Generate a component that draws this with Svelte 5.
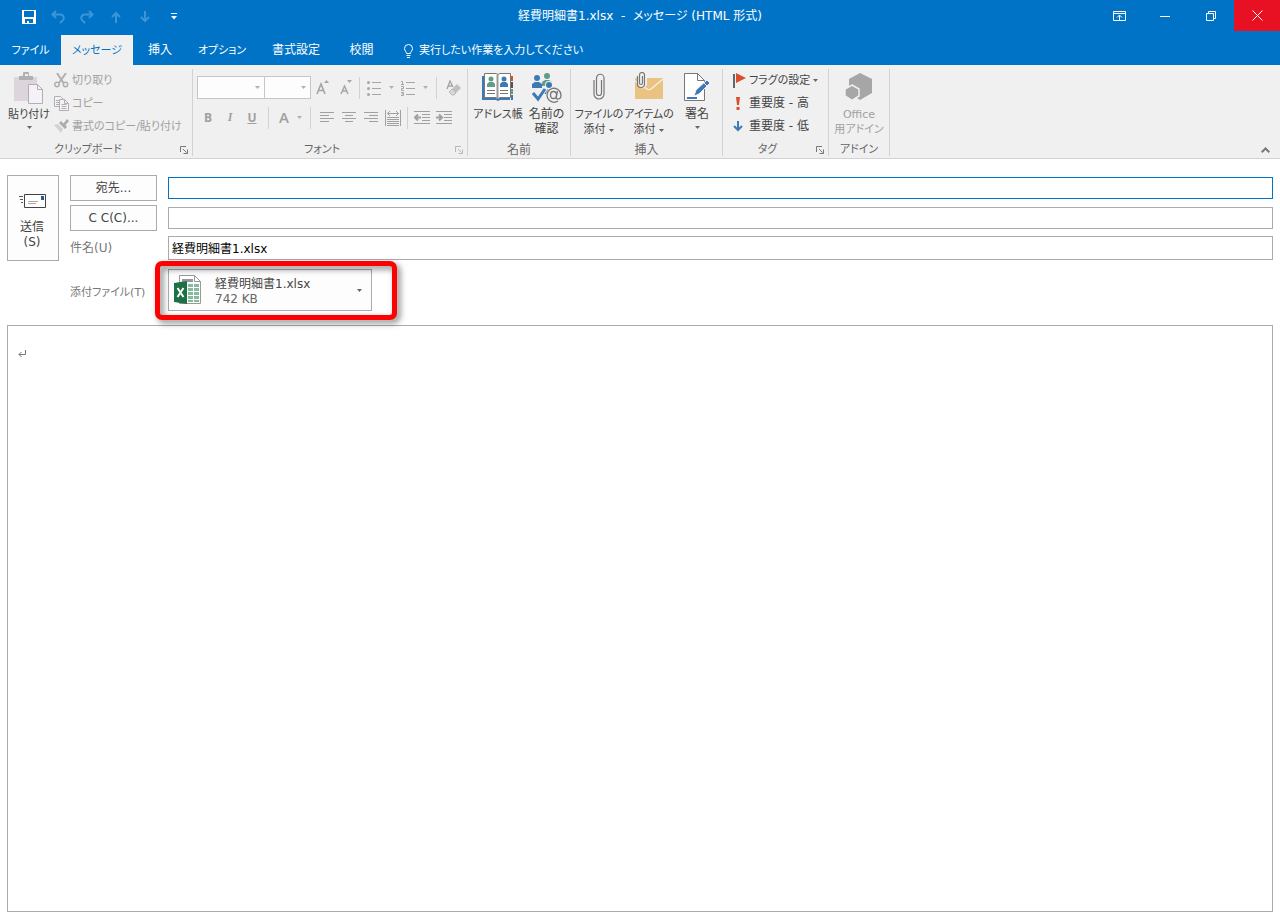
<script>
  const tabs = [
    { name: 'ファイル', kana: true },
    { name: 'メッセージ', kana: true },
    { name: '挿入' },
    { name: 'オプション', kana: true },
    { name: '書式設定' },
    { name: '校閲' }
  ];
  let active = $state('メッセージ');
  let to = $state('');
  let cc = $state('');
  let subject = $state('経費明細書1.xlsx');
</script>

{#snippet caret(cls = '')}
  <svg class="caret {cls}" width="5" height="3" viewBox="0 0 5 3" aria-hidden="true"><path d="M0 0h5L2.5 3z" fill="currentColor" /></svg>
{/snippet}

{#snippet launcher(name)}
  <button class="launcher" aria-label={name}>
    <svg width="8" height="8" viewBox="0 0 8 8" fill="none" stroke="currentColor"><path d="M.5 6V.5H6M3 3l3.500 3.500M7.500 3.500v4h-4" /></svg>
  </button>
{/snippet}

<div class="window">
  <header class="titlebar">
    <div class="quick">
      <button aria-label="上書き保存">
        <svg width="14" height="14" viewBox="0 0 14 14"><path fill="#fff" fill-rule="evenodd" d="M0 0h14v14H0zM2 1v6h10V1zM3 9v4h2v-2h2v2h4V9z" /></svg>
      </button>
      <button class="dim" aria-label="元に戻す">
        <svg width="14" height="14" viewBox="0 0 14 14" fill="none" stroke="currentColor" stroke-width="2"><path d="M5 1L1.500 4.500 5 8M2 4.500h7.500a3.500 3.500 0 0 1 1.500 6.500l-2 2" /></svg>
      </button>
      <button class="dim" aria-label="やり直し">
        <svg width="14" height="14" viewBox="0 0 14 14" fill="none" stroke="currentColor" stroke-width="2"><path d="M9 1l3.500 3.500L9 8M12 4.500H4.500A3.500 3.500 0 0 0 3 11l2 2" /></svg>
      </button>
      <button class="dim" aria-label="前のアイテム">
        <svg width="10" height="12" viewBox="0 0 10 12" fill="none" stroke="currentColor" stroke-width="2"><path d="M5 12V2M1 6l4-4 4 4" /></svg>
      </button>
      <button class="dim" aria-label="次のアイテム">
        <svg width="10" height="12" viewBox="0 0 10 12" fill="none" stroke="currentColor" stroke-width="2"><path d="M5 0v10M1 6l4 4 4-4" /></svg>
      </button>
      <button aria-label="クイック アクセス ツール バーのカスタマイズ">
        <svg width="6" height="7" viewBox="0 0 6 7" fill="#fff"><path d="M0 0h6v1H0zM0 3h6L3 6.500z" /></svg>
      </button>
    </div>
    <h1>経費明細書1.xlsx &nbsp;-&nbsp; メッセージ (HTML 形式)</h1>
    <div class="controls">
      <button aria-label="リボンの表示オプション">
        <svg width="13" height="10" viewBox="0 0 13 10" fill="none" stroke="#fff"><path d="M.5.5h12v9H.5zM0 2.500h13M6.500 9V4M4 6.500L6.500 4 9 6.500" /></svg>
      </button>
      <button aria-label="最小化">
        <svg width="10" height="10" viewBox="0 0 10 10"><path d="M0 5h10v1H0z" fill="#fff" /></svg>
      </button>
      <button aria-label="元に戻す (縮小)">
        <svg width="10" height="10" viewBox="0 0 10 10" fill="none" stroke="#fff"><path d="M.5 2.500h7v7h-7zM2.500 2.500v-2h7v7h-2" /></svg>
      </button>
      <button class="close" aria-label="閉じる">
        <svg width="11" height="11" viewBox="0 0 11 11" stroke="#fff"><path d="M.5.5l10 10M10.500.5l-10 10" /></svg>
      </button>
    </div>
  </header>

  <nav class="tabs">
    {#each tabs as tab}
      <button class:kana={tab.kana} class:active={tab.name === active} onclick={() => (active = tab.name)}>{tab.name}</button>
    {/each}
    <button class="tell kana">
      <svg width="9" height="14" viewBox="0 0 9 14" fill="none" stroke="#fff"><path d="M2.500 9.500C2.500 7.500.5 7 .5 4.500a4 4 0 0 1 8 0C8.500 7 6.500 7.500 6.500 9.500zM2.500 11.500h4M3 13.500h3" /></svg>
      実行したい作業を入力してください
    </button>
  </nav>

  <div class="ribbon">
    <section class="group clipboard">
      <div class="body">
        <button class="big kana">
          <svg class="ic" width="30" height="32" viewBox="0 0 30 32">
            <path d="M0 5h23v24H0z" fill="#dcd6dc" />
            <path d="M5 4h4V2a3 3 0 0 1 6 0v2h4v4H5z" fill="#b0b0b0" /><path d="M11 2h3v2h-3z" fill="#f0f0f0" />
            <path d="M14.500 12.500h9l5 5v14h-14z" fill="#f6f1f7" stroke="#b0b0b0" /><path d="M23.500 12.500v5h5" fill="none" stroke="#b0b0b0" />
          </svg>
          <span>貼り付け</span>
          {@render caret('below')}
        </button>
        <div class="stack">
          <button class="small off kana">
            <svg width="15" height="15" viewBox="0 0 15 15" fill="none" stroke="#b0b0b0"><path d="M3 0l6.500 10M12 0L5 10" stroke-width="2" /><circle cx="3" cy="11.500" r="2.200" stroke-width="1.500" /><circle cx="11.500" cy="11.500" r="2.200" stroke-width="1.500" /></svg>
            切り取り
          </button>
          <button class="small off kana">
            <svg width="15" height="15" viewBox="0 0 15 15" fill="#f6f1f7" stroke="#b0b0b0"><path d="M.5.500h6l3 3v7h-9zM2 4.500h3M2 6.500h3M2 8.500h3" /><path d="M5.500 3.500h5l4 4v7h-9zM10.500 3.500v4h4M7.500 8.500h5M7.500 10.500h5M7.500 12.500h5" /></svg>
            コピー
          </button>
          <button class="small off kana">
            <svg width="15" height="15" viewBox="0 0 15 15"><path d="M0 6l4-1 5 5-2 4z" fill="#d2d2d2" /><path d="M5 4l2-2 2.500 2.500L13 0l2 2-3.500 4L13 8l-2 2z" fill="#ababab" /></svg>
            書式のコピー/貼り付け
          </button>
        </div>
      </div>
      <footer class="kana"><span>クリップボード</span>{@render launcher('クリップボードの設定')}</footer>
    </section>

    <section class="group font">
      <div class="body rows">
        <div class="row">
          <div class="combo wide"><select aria-label="フォント"><option></option></select>{@render caret()}</div>
          <div class="combo"><select aria-label="フォント サイズ"><option></option></select>{@render caret()}</div>
          <button class="tool grow" aria-label="フォントの拡大">
            <svg width="14" height="15" viewBox="0 0 14 15"><path d="M1 14L5 4l4 10M2.500 10.500h5" fill="none" stroke="#a6a6a6" stroke-width="1.600" /><path d="M8 3l2.500-3L13 3z" fill="#a6a6a6" /></svg>
          </button>
          <button class="tool grow" aria-label="フォントの縮小">
            <svg width="14" height="15" viewBox="0 0 14 15"><path d="M1 14l3.500-8L8 14M2.500 11h4" fill="none" stroke="#a6a6a6" stroke-width="1.500" /><path d="M7 0h5L9.500 3z" fill="#a6a6a6" /></svg>
          </button>
          <i class="sep"></i>
          <button class="tool list" aria-label="箇条書き">
            <svg width="14" height="16" viewBox="0 0 14 16" fill="#a6a6a6"><circle cx="1.500" cy="2.500" r="1.500" /><circle cx="1.500" cy="8.500" r="1.500" /><circle cx="1.500" cy="14.500" r="1.500" /><path d="M5 2h9v1H5zM5 8h9v1H5zM5 14h9v1H5z" /></svg>
            {@render caret()}
          </button>
          <button class="tool list" aria-label="段落番号">
            <svg width="14" height="16" viewBox="0 0 14 16" fill="none" stroke="#a6a6a6"><path d="M0 1.500h1.500v3M0 4.500h3M0 6.500h2.500v2H.5v2H3M0 12.500h2.500v3H0M.5 14h2M5 2.500h9M5 8.500h9M5 14.500h9" /></svg>
            {@render caret()}
          </button>
          <i class="sep wide"></i>
          <button class="tool" aria-label="書式のクリア">
            <svg width="15" height="16" viewBox="0 0 15 16"><path d="M1 9l3-8 3 6M2 6h4" fill="none" stroke="#a6a6a6" stroke-width="1.400" /><path d="M11 4l4 4-5 5-4-4z" fill="#c0c0c0" /><path d="M6 9l4 4-2 2H6l-3-3z" fill="#dcd6dc" stroke="#b8b8b8" /></svg>
          </button>
        </div>
        <div class="row">
          <button class="tool bold">B</button>
          <button class="tool italic">I</button>
          <button class="tool bold under">U</button>
          <i class="sep"></i>
          <button class="tool color"><span>A</span></button>
          <button class="tool drop" aria-label="フォントの色">{@render caret()}</button>
          <i class="sep"></i>
          <button class="tool" aria-label="左揃え">
            <svg width="14" height="11" viewBox="0 0 14 11" stroke="#a0a0a0"><path d="M0 .5h14M0 3.500h9M0 6.500h14M0 9.500h9" /></svg>
          </button>
          <button class="tool" aria-label="中央揃え">
            <svg width="14" height="11" viewBox="0 0 14 11" stroke="#a0a0a0"><path d="M0 .5h14M3 3.500h8M0 6.500h14M3 9.500h8" /></svg>
          </button>
          <button class="tool" aria-label="右揃え">
            <svg width="14" height="11" viewBox="0 0 14 11" stroke="#a0a0a0"><path d="M0 .5h14M5 3.500h9M0 6.500h14M5 9.500h9" /></svg>
          </button>
          <button class="tool" aria-label="均等割り付け">
            <svg width="16" height="16" viewBox="0 0 16 16" fill="none" stroke="#a0a0a0"><path d="M.5 0v16M15.500 0v16M2 3.500h12M5 1L2.500 3.500 5 6M11 1l2.500 2.500L11 6M2 7.500h12M2 9.500h12M2 11.500h12M2 13.500h12M2 15.500h12" /></svg>
          </button>
          <i class="sep tight"></i>
          <button class="tool" aria-label="インデントを減らす">
            <svg width="16" height="13" viewBox="0 0 16 13" fill="none" stroke="#a0a0a0"><path d="M0 .5h16M8 3.500h8M8 6.500h8M8 9.500h8M0 12.500h16" /><path d="M7 6.500H1M4 3.500l-3 3 3 3" stroke-width="2" /></svg>
          </button>
          <button class="tool" aria-label="インデントを増やす">
            <svg width="16" height="13" viewBox="0 0 16 13" fill="none" stroke="#a0a0a0"><path d="M0 .5h16M8 3.500h8M8 6.500h8M8 9.500h8M0 12.500h16" /><path d="M0 6.500h6M3 3.500l3 3-3 3" stroke-width="2" /></svg>
          </button>
        </div>
      </div>
      <footer class="kana"><span>フォント</span><span class="faded">{@render launcher('フォントの設定')}</span></footer>
    </section>

    <section class="group names">
      <div class="body">
        <button class="big kana">
          <svg class="ic" width="32" height="32" viewBox="0 0 32 32">
            <path d="M0 4h28v24H18l-2 1-2-1H0z" fill="#3e79b5" />
            <path d="M29 4h2v5h-2z" fill="#d8502b" /><path d="M29 10h2v6h-2z" fill="#555" /><path d="M29 17h2v5h-2z" fill="#5f9e86" /><path d="M29 23h2v5h-2z" fill="#3e79b5" />
            <path d="M2.500 1.500H14l2 1 2-1h10.500v24H18l-2 1.500-2-1.500H2.500z" fill="#fff" stroke="#777" /><path d="M15.500 3v24" stroke="#999" stroke-width="2" />
            <circle cx="9" cy="7" r="2.500" fill="#5f9e86" /><path d="M5 15v-3l2-2h4l2 2v3z" fill="#5f9e86" /><circle cx="22" cy="7" r="2.500" fill="#3e79b5" /><path d="M18 15v-3l2-2h4l2 2v3z" fill="#3e79b5" />
            <path d="M5 18.500h8M5 21.500h8M18 18.500h8M18 21.500h8" stroke="#777" />
          </svg>
          <span>アドレス帳</span>
        </button>
        <button class="big">
          <svg class="ic" width="32" height="32" viewBox="0 0 32 32">
            <circle cx="16" cy="4" r="3" fill="#5f9e86" /><path d="M11 14v-4l3-2h4l3 2v4z" fill="#5f9e86" />
            <circle cx="6" cy="6" r="3" fill="#3e79b5" /><path d="M1 16v-4l3-2h4l3 2v4z" fill="#3e79b5" />
            <circle cx="18" cy="13" r="4" fill="#f0f0f0" /><circle cx="18" cy="13" r="3" fill="#3e79b5" /><path d="M13 20l2-3h6l2 3v2H13z" fill="#3e79b5" />
            <path d="M2 21l5 6 8-12" fill="none" stroke="#f0f0f0" stroke-width="5" /><path d="M2 21l5 6 7-10" fill="none" stroke="#3e79b5" stroke-width="3" />
            <circle cx="23" cy="23" r="8" fill="#f0f0f0" />
            <path d="M27 29a7 7 0 1 1 3-6c0 3-1 4-3 4s-2-1-1.500-3l1-5" fill="none" stroke="#777" stroke-width="1.300" /><ellipse cx="22.500" cy="23" rx="3" ry="3.500" fill="none" stroke="#777" stroke-width="1.300" />
          </svg>
          <span>名前の<br />確認</span>
        </button>
      </div>
      <footer><span>名前</span></footer>
    </section>

    <section class="group insert">
      <div class="body">
        <button class="big kana">
          <svg class="ic" width="12" height="32" viewBox="0 0 12 32" fill="none" stroke="#777" stroke-width="1.200"><path d="M8.500 8v13a2.500 2.500 0 0 1-5 0V6a3.500 3.500 0 0 1 7.500 0v16a4.800 4.800 0 0 1-10 0V8" /></svg>
          <span>ファイルの<br />添付{@render caret('inline')}</span>
        </button>
        <button class="big kana">
          <svg class="ic" width="30" height="32" viewBox="0 0 30 32">
            <path d="M1 6h28v21H1z" fill="#eac282" /><path d="M1 9l12 8c1.500 1 2.500 1 4 0L29 7" fill="none" stroke="#f8efe0" stroke-width="1.500" />
            <path d="M2 0h11v13l-4 4-5-4z" fill="#f0f0f0" /><path d="M8.500 4v7a1.500 1.500 0 0 1-3 0V3a2.200 2.200 0 0 1 5 0v9a3.500 3.500 0 0 1-7 0V4" fill="none" stroke="#777" stroke-width="1.200" />
          </svg>
          <span>アイテムの<br />添付{@render caret('inline')}</span>
        </button>
        <button class="big">
          <svg class="ic" width="28" height="32" viewBox="0 0 28 32">
            <path d="M1.500 1.500h13l7 7v20h-20z" fill="#fff" stroke="#777" /><path d="M14.500 1.500v7h7" fill="none" stroke="#777" />
            <path d="M4 26h10" stroke="#3e79b5" stroke-width="2" /><path d="M11 24l2-6L24 8l3 3-11 11z" fill="#3e79b5" stroke="#f0f0f0" /><path d="M21 11l3 3" stroke="#f0f0f0" />
          </svg>
          <span>署名</span>
          {@render caret('below')}
        </button>
      </div>
      <footer><span>挿入</span></footer>
    </section>

    <section class="group tags">
      <div class="body">
        <div class="stack">
          <button class="small kana">
            <svg width="13" height="15" viewBox="0 0 13 15"><path d="M0 1h2v14H0z" fill="#666" /><path d="M3 0l10 5-10 5z" fill="#d8502b" /></svg>
            フラグの設定{@render caret()}
          </button>
          <button class="small">
            <svg width="13" height="15" viewBox="0 0 13 15" fill="#d8502b"><path d="M3 1h4L6 9H4zM3.500 11h3v3h-3z" /></svg>
            重要度 - 高
          </button>
          <button class="small">
            <svg width="13" height="15" viewBox="0 0 13 15" fill="none" stroke="#3e79b5" stroke-width="2"><path d="M5 2v9M1 7l4 4 4-4" /></svg>
            重要度 - 低
          </button>
        </div>
      </div>
      <footer class="kana"><span>タグ</span>{@render launcher('メッセージ オプション')}</footer>
    </section>

    <section class="group addin">
      <div class="body">
        <button class="big off kana">
          <svg class="ic" width="28" height="32" viewBox="0 0 28 32"><path d="M15 1l12 6v14l-12 7-11-7V7z" fill="#a6a6a6" /><path d="M7 13l7 4v7l-7 4.500L0 24v-7z" fill="#a6a6a6" stroke="#f0f0f0" stroke-width="1.500" /></svg>
          <span>Office<br />用アドイン</span>
        </button>
      </div>
      <footer class="kana"><span>アドイン</span></footer>
    </section>

    <button class="collapse" aria-label="リボンを折りたたむ">
      <svg width="9" height="6" viewBox="0 0 9 6" fill="none" stroke="#777" stroke-width="2"><path d="M.7 5.200L4.500 1.500l3.800 3.700" /></svg>
    </button>
  </div>

  <main>
    <form class="fields" onsubmit={(e) => e.preventDefault()}>
      <button class="boxed send">
        <svg width="27" height="14" viewBox="0 0 27 14"><path d="M0 2.500h4M1 5.500h3M2 8.500h2" stroke="#555" /><path d="M5.500.5h21v13h-21z" fill="#fff" stroke="#444" /><path d="M22 2h3v4h-3z" fill="#2b579a" /><path d="M9 7.500h10M9 9.500h8" stroke="#aaa" /></svg>
        <span>送信<br />(S)</span>
      </button>
      <button class="boxed" type="button">宛先...</button>
      <input class="to" aria-label="宛先" bind:value={to} />
      <button class="boxed" type="button">C C(C)...</button>
      <input aria-label="CC" bind:value={cc} />
      <label for="subject">件名(U)</label>
      <input id="subject" class="subject" bind:value={subject} />
      <span class="attach-label kana" id="attach-label">添付ファイル(T)</span>
      <div class="attach" aria-labelledby="attach-label" role="group">
        <button class="file" type="button">
          <svg width="28" height="32" viewBox="0 0 28 32">
            <path d="M5.500 1.500h15l6 6v22h-21z" fill="#fff" stroke="#999" /><path d="M20.500 1.500v6h6" fill="none" stroke="#999" />
            <path d="M8 5h11v3H8z" fill="#999" />
            <path d="M14 10h5v3h-5zM20 10h5v3h-5zM14 14h5v3h-5zM20 14h5v3h-5zM14 18h5v3h-5zM20 18h5v3h-5zM14 22h5v3h-5zM20 22h5v3h-5zM14 26h5v2h-5zM20 26h5v2h-5z" fill="#84bb9c" />
            <path d="M0 9l13-2v23L0 28z" fill="#1e7145" /><path d="M3.500 14l6 9M9.500 14l-6 9" stroke="#fff" stroke-width="2" />
          </svg>
          <span class="file-text">経費明細書1.xlsx<small>742 KB</small></span>
          {@render caret()}
        </button>
        <div class="highlight"></div>
      </div>
    </form>
    <div class="editor" contenteditable="true" role="textbox" tabindex="0" aria-label="本文" aria-multiline="true">
      <svg width="8" height="8" viewBox="0 0 8 8" fill="none" stroke="#777"><path d="M7.500 0v4.500H1M3.500 2L1 4.500 3.500 7" /></svg>
    </div>
  </main>
</div>

<style>
  :global(body) { margin: 0; }
  .window {
    display: flex; flex-direction: column; min-height: 100vh; background: #fff; color: #444;
    font: 12px/15px "DejaVu Sans", "Noto Sans CJK JP", sans-serif;
    font-feature-settings: "palt";
  }
  .window, .window * { box-sizing: border-box; }
  button { margin: 0; padding: 0; border: 0; background: none; color: inherit; font: inherit; font-feature-settings: inherit; white-space: nowrap; }
  svg { flex: none; display: block; }
  .kana { font-size: 11px; }

  .titlebar { display: grid; grid-template-columns: 1fr auto 1fr; height: 35px; background: #0173c7; color: #fff; }
  .quick { display: flex; padding-left: 14px; }
  .quick button { display: grid; place-items: center; width: 29px; height: 33px; }
  .dim { color: #3d95d8; }
  h1 { margin: 0; font-size: 12px; font-weight: 400; line-height: 33px; }
  .controls { display: flex; justify-content: flex-end; }
  .controls button { display: grid; place-items: center; width: 46px; height: 31px; }
  .controls .close { background: #e81123; }

  .tabs { display: grid; grid-template-columns: 61px 72px 54px 70px 78px 53px auto; justify-content: start; height: 30px; background: #0173c7; color: #fff; }
  .tabs button { padding-top: 1px; }
  .tabs .active { background: #f0f0f0; color: #0173c7; }
  .tabs .tell { display: flex; align-items: center; gap: 6px; padding-left: 16px; }

  .ribbon { display: flex; height: 94px; padding: 4px 0 0; background: #f0f0f0; border-bottom: 1px solid #d2d2d2; }
  .group { display: flex; flex-direction: column; flex: none; margin-bottom: 2px; border-right: 1px solid #d2d2d2; }
  .body { display: flex; flex: 1; }
  footer { display: flex; align-items: flex-end; height: 15px; color: #666; }
  footer > span:first-child { flex: 1; text-align: center; line-height: 12px; }
  .launcher { display: grid; place-items: center; width: 16px; height: 12px; color: #777; }
  .faded .launcher { color: #b8b8b8; }
  .clipboard { width: 193px; }
  .font { width: 275px; }
  .names { width: 103px; }
  .insert { width: 152px; }
  .tags { width: 106px; }
  .addin { width: 61px; }

  .big { display: flex; flex-direction: column; align-items: center; gap: 3px; padding-top: 3px; line-height: 15px; text-align: center; }
  .caret { display: inline-block; color: #666; }
  .below { margin-top: 1px; }
  .inline { margin-left: 4px; vertical-align: middle; }
  .off { color: #a0a0a0; }
  .clipboard .big { width: 54px; padding-left: 4px; }
  .names .body { display: grid; grid-template-columns: 56px 41px; padding-left: 2px; }
  .insert .body { display: grid; grid-template-columns: 50px 50px 46px; padding-left: 3px; }
  .addin .big { width: 100%; }
  .stack { display: flex; flex-direction: column; }
  .small { display: flex; align-items: center; gap: 3px; height: 23px; }
  .tags .body { padding-left: 10px; }

  .rows { flex-direction: column; gap: 7px; padding: 7px 0 0 4px; }
  .row { display: flex; align-items: center; height: 23px; }
  .row .caret { color: #b0b0b0; }
  .combo { display: grid; grid-template-columns: 1fr 5px; align-items: center; width: 47px; height: 23px; padding-right: 4px; background: #fdfdfd; border: 1px solid #c6c6c6; }
  .combo.wide { width: 67px; border-right: 0; }
  select { appearance: none; width: 100%; min-width: 0; padding: 0; border: 0; background: none; font: inherit; }
  .tool { display: flex; align-items: center; justify-content: center; width: 22px; height: 23px; color: #a0a0a0; }
  .grow { width: 24px; }
  .list { width: 34px; gap: 8px; }
  .drop { width: 11px; }
  .sep { width: 1px; height: 22px; margin: 0 5px; background: #d2d2d2; }
  .row:first-child .sep { margin: 0 3px 0 0; }
  .row:first-child .sep.wide { margin: 0 5px; }
  .sep.tight { margin: 0 3px; }
  .bold { font-family: "Open Sans", sans-serif; font-weight: 700; }
  .under { text-decoration: underline; }
  .italic { font-family: "Liberation Serif", serif; font-weight: 700; font-style: italic; }
  .color { width: 20px; font: 600 15px/15px "Open Sans", sans-serif; }
  .collapse { align-self: flex-end; margin-left: auto; padding: 0 10px 5px; }

  main { display: flex; flex: 1; flex-direction: column; padding: 16px 7px 8px; }
  .fields { display: grid; grid-template-columns: 52px 87px 1fr; grid-template-rows: 26px 26px 26px 50px; gap: 4px 11px; align-items: center; }
  .boxed { align-self: stretch; background: #fdfdfd; border: 1px solid #ababab; }
  .send { grid-row: 1 / 4; display: flex; flex-direction: column; align-items: center; justify-content: center; gap: 12px; padding: 8px 2px 0 0; }
  input { width: 100%; height: 22px; padding: 0 3px 2px; border: 1px solid #ababab; border-radius: 0; background: #fff; color: #000; font: inherit; outline: 0; }
  .to { border-color: #0173c7; }
  .subject { height: 24px; }
  label, .attach-label { color: #777; white-space: nowrap; }
  .attach-label { grid-column: 2; padding-top: 4px; }
  .attach { position: relative; width: 204px; }
  .file { display: flex; align-items: center; width: 100%; height: 42px; padding: 0 9px 0 5px; gap: 13px; background: #fdfdfd; border: 1px solid #ababab; text-align: left; }
  .file-text { flex: 1; padding-top: 3px; }
  small { display: block; font-size: 12px; color: #666; }
  .highlight { position: absolute; inset: -8px -25px -9px -13px; border: 5px solid #f00; border-radius: 7px; filter: drop-shadow(3px 3px 3px rgb(0 0 0 / 50%)); pointer-events: none; }
  .editor { flex: 1; margin-top: 10px; padding: 24px 10px; border: 1px solid #ababab; outline: 0; }
</style>
